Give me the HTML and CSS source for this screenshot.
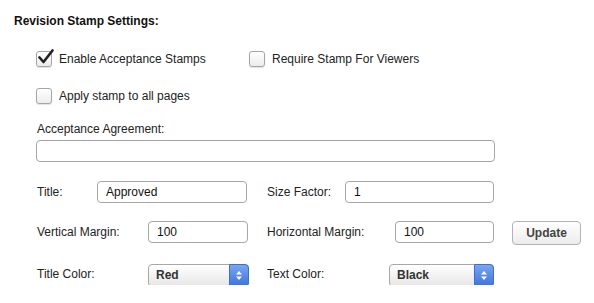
FILE: index.html
```html
<!DOCTYPE html>
<html>
<head>
<meta charset="utf-8">
<link rel="stylesheet" href="styles.css">
</head>
<body>
<div class="panel">
  <h2 class="heading">Revision Stamp Settings:</h2>
  <div class="check-row">
    <label class="check check-wide"><span class="box"><svg class="tick" width="18" height="16" viewBox="0 0 18 16"><path d="M2.5 8.5 L6.5 13 L15.5 1.5" fill="none" stroke="#222" stroke-width="2.6" stroke-linecap="round" stroke-linejoin="round"/></svg></span>Enable Acceptance Stamps</label>
    <label class="check"><span class="box"></span>Require Stamp For Viewers</label>
  </div>
  <div class="check-row check-row-2">
    <label class="check"><span class="box"></span>Apply stamp to all pages</label>
  </div>
  <div class="agreement">
    <div class="agree-label">Acceptance Agreement:</div>
    <div class="field agree-field"></div>
  </div>
  <div class="row row-first">
    <div class="cell"><span class="lbl lbl-title">Title:</span><span class="field w150">Approved</span></div>
    <div class="cell"><span class="lbl lbl-size">Size Factor:</span><span class="field w149">1</span></div>
  </div>
  <div class="row row-mid">
    <div class="cell"><span class="lbl lbl-long">Vertical Margin:</span><span class="field w100">100</span></div>
    <div class="cell"><span class="lbl lbl-hm">Horizontal Margin:</span><span class="field w99">100</span></div>
    <button class="btn">Update</button>
  </div>
  <div class="row row-last">
    <div class="cell"><span class="lbl lbl-long">Title Color:</span><span class="select w101">Red<span class="arrows"><svg width="8" height="11" viewBox="0 0 8 11"><path d="M1 4.5 L4 1 L7 4.5 Z M1 6.5 L4 10 L7 6.5 Z" fill="#fff"/></svg></span></span></div>
    <div class="cell"><span class="lbl lbl-tc">Text Color:</span><span class="select w105">Black<span class="arrows"><svg width="8" height="11" viewBox="0 0 8 11"><path d="M1 4.5 L4 1 L7 4.5 Z M1 6.5 L4 10 L7 6.5 Z" fill="#fff"/></svg></span></span></div>
  </div>
</div>
</body>
</html>
```

FILE: styles.css
```css
html, body {
  margin: 0;
  padding: 0;
  background: #fff;
}
body {
  font-family: "Liberation Sans", Arial, sans-serif;
  font-size: 12px;
  color: #222;
}
.panel {
  padding: 14px 0 0 14px;
}
.heading {
  margin: 0;
  font-size: 12px;
  font-weight: bold;
  line-height: 14px;
  color: #111;
}
.check-row {
  display: flex;
  margin: 23px 0 0 22px;
  height: 16px;
  align-items: center;
}
.check-row-2 {
  margin-top: 21px;
}
.check {
  display: flex;
  align-items: center;
  gap: 7px;
}
.check-wide {
  width: 213px;
}
.box {
  position: relative;
  width: 14px;
  height: 14px;
  border: 1px solid #a4a4a4;
  border-radius: 3px;
  background: linear-gradient(#ffffff, #ececec);
  box-shadow: 0 1px 1px rgba(0,0,0,0.12);
}
.tick {
  position: absolute;
  left: 0px;
  top: -3px;
}
.agreement {
  margin: 18px 0 0 22px;
}
.agree-label {
  line-height: 14px;
  margin-left: 1px;
}
.field {
  box-sizing: border-box;
  display: flex;
  align-items: center;
  height: 22px;
  border: 1px solid #a6a6a6;
  border-radius: 4px;
  background: #fff;
  padding-left: 8px;
  color: #111;
}
.agree-field {
  margin-top: 4px;
  width: 459px;
}
.row {
  display: flex;
  align-items: center;
  margin: 19px 0 0 23px;
  height: 22px;
}
.row-mid {
  margin-top: 18px;
}
.row-last {
  margin-top: 20px;
}
.cell {
  display: flex;
  align-items: center;
  width: 230px;
}
.lbl {
  display: inline-block;
}
.lbl-title { width: 60px; }
.lbl-size { width: 78px; }
.lbl-long { width: 111px; }
.lbl-hm { width: 128px; }
.lbl-tc { width: 122px; }
.w150 { width: 150px; }
.w149 { width: 149px; }
.w100 { width: 100px; }
.w99 { width: 99px; }
.w101 { width: 101px; }
.w105 { width: 105px; }
.btn {
  margin-left: 15px;
  width: 69px;
  height: 24px;
  box-sizing: border-box;
  border: 1px solid #b3b3b3;
  border-radius: 4px;
  background: linear-gradient(#ffffff, #ececec);
  font-family: "Liberation Sans", Arial, sans-serif;
  font-weight: bold;
  font-size: 12px;
  color: #444;
  padding: 0;
  margin-top: 2px;
}
.select {
  position: relative;
  box-sizing: border-box;
  display: flex;
  align-items: center;
  height: 23px;
  border: 1px solid #a8a8a8;
  border-radius: 4px;
  background: linear-gradient(#ffffff, #e6e6e6);
  padding-left: 7px;
  font-weight: bold;
  color: #333;
  margin-top: 2px;
}
.arrows {
  position: absolute;
  right: -1px;
  top: -1px;
  bottom: -1px;
  width: 20px;
  border-radius: 0 4px 4px 0;
  background: linear-gradient(#79a6ee, #3e73dc);
  border: 1px solid #3c6fcf;
  box-sizing: border-box;
  display: flex;
  align-items: center;
  justify-content: center;
}
```
